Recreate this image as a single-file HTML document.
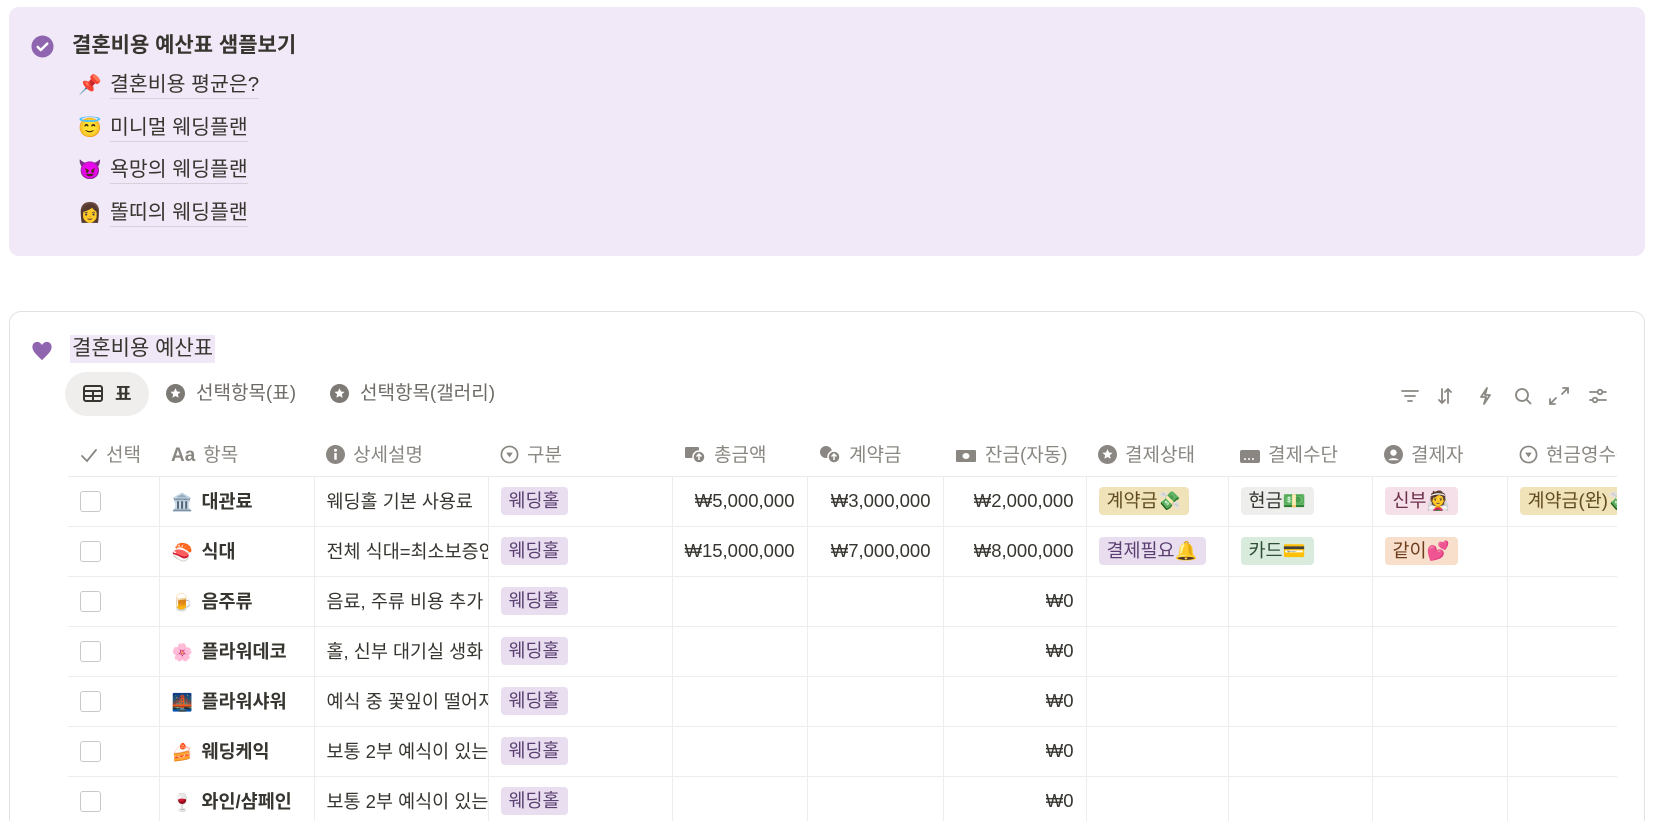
<!DOCTYPE html>
<html style="height:821px;overflow:hidden"><head><meta charset="utf-8">
<style>
*{box-sizing:border-box;margin:0;padding:0}
html,body{width:1659px;height:821px;max-height:821px;overflow:hidden}
body{background:#fff;font-family:"Liberation Sans","Noto Sans CJK KR",sans-serif;color:#37352f;position:relative}
.a{position:absolute}
.card1{left:9px;top:7px;width:1636px;height:249px;background:#f2e9f8;border-radius:10px}
.sub{position:absolute;left:78px;font-size:20.5px;height:28px;line-height:28px;white-space:nowrap}
.sub .e{display:inline-block;width:24px;font-size:19px}
.sub .t{display:inline-block;margin-left:8px;border-bottom:1px solid #d6cfdc;line-height:26px}
.card2{left:9px;top:311px;width:1636px;height:530px;border:1px solid #e3e2e0;border-radius:12px}
.tbl{position:absolute;left:68px;top:432px;width:1549px;height:389px;overflow:hidden}
table{border-collapse:collapse;table-layout:fixed;width:1600px;font-size:18.5px}
td,th{white-space:nowrap;overflow:hidden;height:50px;padding:0 12px;text-align:left;font-weight:normal}
th{height:44px;color:#8a8782;border-bottom:1px solid #e9e9e7;font-size:19px}
td{border-bottom:1px solid #ededec;border-left:1px solid #ededec}
td:first-child{border-left:none}
th svg{vertical-align:-3px;margin-right:8px}
.r{text-align:right}
.tag{display:inline-block;height:28px;line-height:28px;padding:0 8px;border-radius:4px;font-size:18.5px}
.p{background:#e8def0;color:#5b3f70}.y{background:#f0e3ba;color:#5f4a1e}.g{background:#eeeeec;color:#37352f}
.pk{background:#f5dfe8;color:#6b2f4a}.gr{background:#d9ebdd;color:#2f4d37}.o{background:#f8dfcb;color:#6b3d1e}
.cb{display:inline-block;width:21px;height:21px;border:1.5px solid #c9c8c5;border-radius:3px;vertical-align:middle;margin-left:0}
.b{font-weight:bold}
.em{display:inline-block;width:22px;font-size:17px;margin-right:8px}
.ti{stroke:#8a8782;fill:none;stroke-width:1.8;stroke-linecap:round}
</style></head><body>
<div class="a card1"></div>
<svg class="a" style="left:31px;top:35px" width="23" height="23" viewBox="0 0 24 24"><circle cx="12" cy="12" r="11.5" fill="#9065b0"/><path d="M7 12.5l3.2 3.2L17 9" stroke="#fff" stroke-width="2.6" fill="none" stroke-linecap="round" stroke-linejoin="round"/></svg>
<div class="a b" style="left:72px;top:32px;font-size:21px;line-height:28px">결혼비용 예산표 샘플보기</div>
<div class="sub" style="top:71px"><span class="e">📌</span><span class="t">결혼비용 평균은?</span></div>
<div class="sub" style="top:114px"><span class="e">😇</span><span class="t">미니멀 웨딩플랜</span></div>
<div class="sub" style="top:156px"><span class="e">😈</span><span class="t">욕망의 웨딩플랜</span></div>
<div class="sub" style="top:199px"><span class="e">👩</span><span class="t">똘띠의 웨딩플랜</span></div>

<div class="a card2"></div>
<svg class="a" style="left:31px;top:340px" width="22" height="22" viewBox="0 0 24 24"><path d="M12 22C6 16 1.5 12.5 1.5 7.5 1.5 4.3 3.8 2 6.7 2c2.2 0 4.1 1.4 5.300 3.4C13.2 3.4 15.1 2 17.3 2c2.9 0 5.2 2.3 5.2 5.5C22.5 12.5 18 16 12 22z" fill="#9065b0"/></svg>
<div class="a" style="left:70px;top:335px;height:28px;padding:0 2px;background:#f1e8f7;font-size:21px;line-height:28px">결혼비용 예산표</div>

<div class="a" style="left:65px;top:372px;width:84px;height:44px;border-radius:22px;background:#efeeec"></div>
<svg class="a" style="left:83px;top:385px" width="20" height="17" viewBox="0 0 20 17"><rect x="1" y="1" width="18" height="15" rx="2" fill="none" stroke="#37352f" stroke-width="2"/><path d="M1 6h18M1 11h18M10 6v10" stroke="#37352f" stroke-width="2"/></svg>
<div class="a b" style="left:115px;top:382px;font-size:18px;line-height:24px">표</div>
<svg class="a" style="left:166px;top:384px" width="19" height="19" viewBox="0 0 20 20"><circle cx="10" cy="10" r="10" fill="#7d7a75"/><path d="M10 4.5l1.6 3.4 3.7.4-2.8 2.5.8 3.7L10 12.6l-3.3 1.9.8-3.7-2.8-2.5 3.7-.4z" fill="#fff"/></svg>
<div class="a" style="left:196px;top:381px;font-size:19px;line-height:26px;color:#6e6b66">선택항목(표)</div>
<svg class="a" style="left:330px;top:384px" width="19" height="19" viewBox="0 0 20 20"><circle cx="10" cy="10" r="10" fill="#7d7a75"/><path d="M10 4.5l1.6 3.4 3.7.4-2.8 2.5.8 3.7L10 12.6l-3.3 1.9.8-3.7-2.8-2.5 3.7-.4z" fill="#fff"/></svg>
<div class="a" style="left:360px;top:381px;font-size:19px;line-height:26px;color:#6e6b66">선택항목(갤러리)</div>

<svg class="a" style="left:1400px;top:386px" width="220" height="20" viewBox="0 0 220 20">
<g class="ti"><path d="M2 5h16M5 10h10M8 15h4"/>
<path d="M42 3v14M39 14l3 3 3-3M48 17V3M45 6l3-3 3 3"/>
<path d="M87 2l-6 9h5l-2 7 6-9h-5z" stroke-linejoin="round"/>
<circle cx="122" cy="9" r="6"/><path d="M126.5 13.5l4 4"/>
<path d="M156 12l-6 6M150 13v5h5M162 8l6-6M163 2h5v5"/>
<path d="M190 6h16M190 14h16"/><circle cx="200" cy="6" r="2.3" fill="#fff"/><circle cx="195" cy="14" r="2.3" fill="#fff"/></g></svg>

<div class="tbl"><table>
<colgroup><col style="width:91px"><col style="width:155px"><col style="width:174px"><col style="width:184px"><col style="width:135px"><col style="width:136px"><col style="width:143px"><col style="width:142px"><col style="width:144px"><col style="width:135px"><col style="width:161px"></colgroup>
<tr>
<th><svg width="18" height="16" viewBox="0 0 18 16"><path d="M2 8l5 5 9-11" class="ti" stroke-width="2"/></svg>선택</th>
<th><span style="font-weight:bold;margin-right:8px;color:#8a8782">Aa</span>항목</th>
<th><svg width="19" height="19" viewBox="0 0 20 20"><circle cx="10" cy="10" r="10" fill="#8a8782"/><rect x="8.7" y="8.5" width="2.6" height="7" fill="#fff"/><circle cx="10" cy="5.5" r="1.6" fill="#fff"/></svg>상세설명</th>
<th><svg width="19" height="19" viewBox="0 0 20 20"><circle cx="10" cy="10" r="8.5" class="ti"/><path d="M6.5 8h7L10 13z" fill="#8a8782"/></svg>구분</th>
<th><svg width="22" height="19" viewBox="0 0 22 19"><rect x="1" y="2" width="14" height="11" rx="1" fill="#8a8782"/><circle cx="15" cy="12" r="6" fill="#8a8782" stroke="#fff" stroke-width="1.5"/><path d="M15 9v6M12.5 11.5L15 9l2.5 2.5" stroke="#fff" stroke-width="1.5" fill="none"/></svg>총금액</th>
<th><svg width="22" height="19" viewBox="0 0 22 19"><circle cx="7" cy="7" r="6" fill="#8a8782"/><circle cx="15" cy="12" r="6" fill="#8a8782" stroke="#fff" stroke-width="1.5"/><path d="M15 9v6M12.5 11.5L15 9l2.5 2.5" stroke="#fff" stroke-width="1.5" fill="none"/></svg>계약금</th>
<th><svg width="22" height="16" viewBox="0 0 22 16"><rect x="1" y="2" width="20" height="12" rx="1" fill="#8a8782"/><ellipse cx="11" cy="8" rx="3.5" ry="3" fill="#fff"/></svg>잔금(자동)</th>
<th><svg width="19" height="19" viewBox="0 0 20 20"><circle cx="10" cy="10" r="10" fill="#8a8782"/><path d="M10 4.5l1.6 3.4 3.7.4-2.8 2.5.8 3.7L10 12.6l-3.3 1.9.8-3.7-2.8-2.5 3.7-.4z" fill="#fff"/></svg>결제상태</th>
<th><svg width="20" height="16" viewBox="0 0 20 16"><rect x="0" y="2" width="20" height="13" rx="2" fill="#8a8782"/><path d="M4 11h2M8 11h2M12 11h2" stroke="#fff" stroke-width="1.5"/></svg>결제수단</th>
<th><svg width="19" height="19" viewBox="0 0 20 20"><circle cx="10" cy="10" r="10" fill="#8a8782"/><circle cx="10" cy="8" r="3.3" fill="#fff"/><path d="M4.5 16c1.5-3 9.5-3 11 0" fill="#fff"/></svg>결제자</th>
<th><svg width="19" height="19" viewBox="0 0 20 20"><circle cx="10" cy="10" r="8.5" class="ti"/><path d="M6.5 8h7L10 13z" fill="#8a8782"/></svg>현금영수증</th>
</tr>
<tr><td><span class="cb"></span></td><td class="b"><span class="em">🏛️</span>대관료</td><td>웨딩홀 기본 사용료</td><td><span class="tag p">웨딩홀</span></td><td class="r">₩5,000,000</td><td class="r">₩3,000,000</td><td class="r">₩2,000,000</td><td><span class="tag y">계약금💸</span></td><td><span class="tag g">현금💵</span></td><td><span class="tag pk">신부👰</span></td><td><span class="tag y">계약금(완)💸</span></td></tr>
<tr><td><span class="cb"></span></td><td class="b"><span class="em">🍣</span>식대</td><td>전체 식대=최소보증인원</td><td><span class="tag p">웨딩홀</span></td><td class="r">₩15,000,000</td><td class="r">₩7,000,000</td><td class="r">₩8,000,000</td><td><span class="tag p">결제필요🔔</span></td><td><span class="tag gr">카드💳</span></td><td><span class="tag o">같이💕</span></td><td></td></tr>
<tr><td><span class="cb"></span></td><td class="b"><span class="em">🍺</span>음주류</td><td>음료, 주류 비용 추가</td><td><span class="tag p">웨딩홀</span></td><td></td><td></td><td class="r">₩0</td><td></td><td></td><td></td><td></td></tr>
<tr><td><span class="cb"></span></td><td class="b"><span class="em">🌸</span>플라워데코</td><td>홀, 신부 대기실 생화</td><td><span class="tag p">웨딩홀</span></td><td></td><td></td><td class="r">₩0</td><td></td><td></td><td></td><td></td></tr>
<tr><td><span class="cb"></span></td><td class="b"><span class="em">🌉</span>플라워샤워</td><td>예식 중 꽃잎이 떨어지는</td><td><span class="tag p">웨딩홀</span></td><td></td><td></td><td class="r">₩0</td><td></td><td></td><td></td><td></td></tr>
<tr><td><span class="cb"></span></td><td class="b"><span class="em">🍰</span>웨딩케익</td><td>보통 2부 예식이 있는</td><td><span class="tag p">웨딩홀</span></td><td></td><td></td><td class="r">₩0</td><td></td><td></td><td></td><td></td></tr>
<tr><td><span class="cb"></span></td><td class="b"><span class="em">🍷</span>와인/샴페인</td><td>보통 2부 예식이 있는</td><td><span class="tag p">웨딩홀</span></td><td></td><td></td><td class="r">₩0</td><td></td><td></td><td></td><td></td></tr>
</table></div>
</body></html>
